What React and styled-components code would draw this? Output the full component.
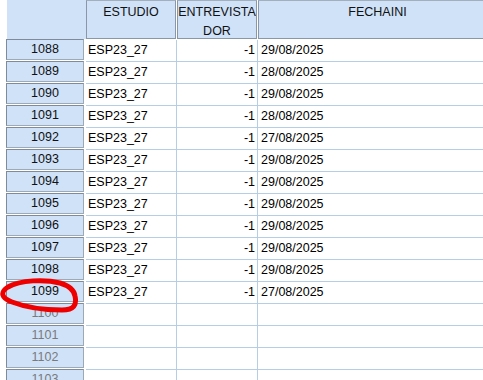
import React from "react";
import styled, { createGlobalStyle } from "styled-components";

const Global = createGlobalStyle`
  html, body { margin: 0; padding: 0; background: #ffffff; overflow: hidden; }
  body { font-family: "Liberation Sans", Arial, sans-serif; }
`;

const BLUE = "#cfe2f8";
const GRID = "#b6cde6";

const Wrap = styled.div`
  position: relative;
  width: 483px;
  height: 380px;
  overflow: hidden;
  background: #fff;
`;

const Sheet = styled.div`
  display: grid;
  grid-template-columns: 86px 91px 81px 240px;
  grid-template-rows: 40px;
  grid-auto-rows: 22px;
  font-size: 12.5px;
  color: #000;
`;

const Corner = styled.div`
  margin-left: 7px;
  height: 39px;
  background: ${BLUE};
`;

const ColHeader = styled.div`
  box-sizing: border-box;
  height: 39px;
  margin-right: 1px;
  background: ${BLUE};
  border: 1px solid #8a97a7;
  border-color: #a3afbd #8a97a7 #8a97a7 #8a97a7;
  text-align: center;
  line-height: 19px;
  padding-top: 2px;
  white-space: nowrap;
  overflow: hidden;
  color: #111;
`;

const RowHead = styled.div`
  display: flex;
  align-items: flex-start;
`;

const RowHeadBox = styled.div`
  box-sizing: border-box;
  margin: -1px 0 0 6px;
  width: 78px;
  height: 21px;
  background: ${BLUE};
  border: 1px solid;
  border-color: #7f8b99 #9ea9b6 #9ea9b6 #7f8b99;
  text-align: center;
  line-height: 19px;
  color: ${(p) => (p.$empty ? "#7a7a7a" : "#111")};
`;

const Cell = styled.div`
  box-sizing: border-box;
  border-right: 1px solid ${GRID};
  border-bottom: 1px solid ${GRID};
  line-height: 21px;
  padding: 0 ${(p) => (p.$align === "right" ? "2px" : "0")} 0
    ${(p) => (p.$pl || 2)}px;
  text-align: ${(p) => p.$align || "left"};
  white-space: nowrap;
  overflow: hidden;
`;

const Annotation = styled.svg`
  position: absolute;
  left: 0;
  top: 0;
  pointer-events: none;
`;

const rows = [
  [1088, "ESP23_27", "-1", "29/08/2025"],
  [1089, "ESP23_27", "-1", "28/08/2025"],
  [1090, "ESP23_27", "-1", "29/08/2025"],
  [1091, "ESP23_27", "-1", "28/08/2025"],
  [1092, "ESP23_27", "-1", "27/08/2025"],
  [1093, "ESP23_27", "-1", "29/08/2025"],
  [1094, "ESP23_27", "-1", "29/08/2025"],
  [1095, "ESP23_27", "-1", "29/08/2025"],
  [1096, "ESP23_27", "-1", "29/08/2025"],
  [1097, "ESP23_27", "-1", "29/08/2025"],
  [1098, "ESP23_27", "-1", "29/08/2025"],
  [1099, "ESP23_27", "-1", "27/08/2025"],
  [1100, "", "", ""],
  [1101, "", "", ""],
  [1102, "", "", ""],
  [1103, "", "", ""],
];

export default function App() {
  return (
    <Wrap>
      <Global />
      <Sheet>
        <Corner />
        <ColHeader>ESTUDIO</ColHeader>
        <ColHeader>
          ENTREVISTA
          <br />
          DOR
        </ColHeader>
        <ColHeader>FECHAINI</ColHeader>
        {rows.map(([n, est, ent, fecha]) => (
          <React.Fragment key={n}>
            <RowHead>
              <RowHeadBox $empty={!est}>{n}</RowHeadBox>
            </RowHead>
            <Cell>{est}</Cell>
            <Cell $align="right">{ent}</Cell>
            <Cell $pl={3}>{fecha}</Cell>
          </React.Fragment>
        ))}
      </Sheet>
      <Annotation width="483" height="380" viewBox="0 0 483 380">
        <path
          d="M 60 283 C 45 279, 20 280, 8 287 C 0 292, 1 298, 12 302 C 25 307, 45 310, 62 310 C 74 310, 77 305, 75 296 C 74 290, 70 286, 60 283"
          fill="none"
          stroke="#ee0000"
          strokeWidth="5"
          strokeLinecap="round"
          strokeLinejoin="round"
        />
      </Annotation>
    </Wrap>
  );
}
